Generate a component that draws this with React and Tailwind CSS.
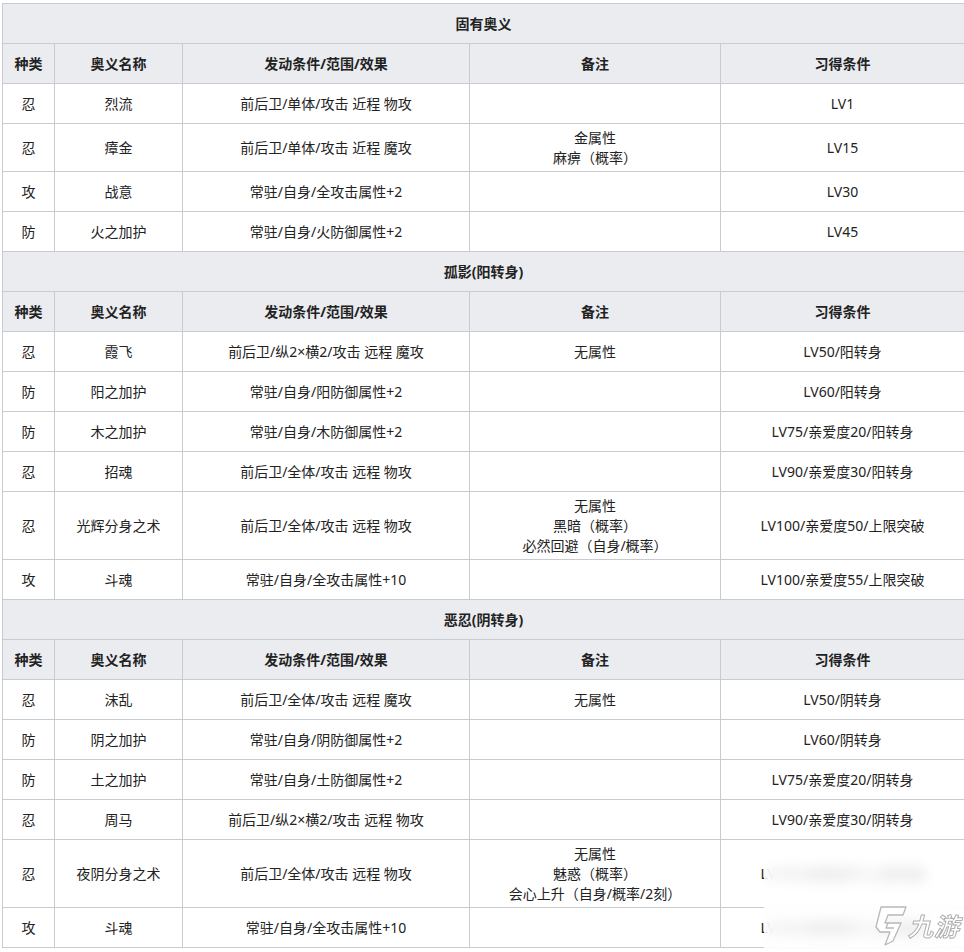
import React from "react";

const sections = [
  {
    title: "固有奥义",
    rows: [
      ["忍", "烈流", "前后卫/单体/攻击 近程 物攻", [], "LV1"],
      ["忍", "瘴金", "前后卫/单体/攻击 近程 魔攻", ["金属性", "麻痹（概率）"], "LV15"],
      ["攻", "战意", "常驻/自身/全攻击属性+2", [], "LV30"],
      ["防", "火之加护", "常驻/自身/火防御属性+2", [], "LV45"],
    ],
  },
  {
    title: "孤影(阳转身)",
    rows: [
      ["忍", "霞飞", "前后卫/纵2×横2/攻击 远程 魔攻", ["无属性"], "LV50/阳转身"],
      ["防", "阳之加护", "常驻/自身/阳防御属性+2", [], "LV60/阳转身"],
      ["防", "木之加护", "常驻/自身/木防御属性+2", [], "LV75/亲爱度20/阳转身"],
      ["忍", "招魂", "前后卫/全体/攻击 远程 物攻", [], "LV90/亲爱度30/阳转身"],
      ["忍", "光辉分身之术", "前后卫/全体/攻击 远程 物攻", ["无属性", "黑暗（概率）", "必然回避（自身/概率）"], "LV100/亲爱度50/上限突破"],
      ["攻", "斗魂", "常驻/自身/全攻击属性+10", [], "LV100/亲爱度55/上限突破"],
    ],
  },
  {
    title: "恶忍(阴转身)",
    rows: [
      ["忍", "沫乱", "前后卫/全体/攻击 远程 魔攻", ["无属性"], "LV50/阴转身"],
      ["防", "阴之加护", "常驻/自身/阴防御属性+2", [], "LV60/阴转身"],
      ["防", "土之加护", "常驻/自身/土防御属性+2", [], "LV75/亲爱度20/阴转身"],
      ["忍", "周马", "前后卫/纵2×横2/攻击 远程 物攻", [], "LV90/亲爱度30/阴转身"],
      ["忍", "夜阴分身之术", "前后卫/全体/攻击 远程 物攻", ["无属性", "魅惑（概率）", "会心上升（自身/概率/2刻）"], "LV100/亲爱度50/上限突破"],
      ["攻", "斗魂", "常驻/自身/全攻击属性+10", [], "LV100/亲爱度55/上限突破"],
    ],
  },
];

const headers = ["种类", "奥义名称", "发动条件/范围/效果", "备注", "习得条件"];

const cell = "border border-[#c8ccd1] px-[8px] py-[3.5px] text-center align-middle";

export default function App() {
  return (
    <div
      className="relative w-[964px] h-[952px] overflow-hidden bg-white text-[#222222] text-[14px] leading-[20px]"
      style={{ fontFamily: '"Noto Sans", "Noto Sans CJK SC", sans-serif' }}
    >
      <div className="pt-[3px] pl-[2px]">
        <table className="table-fixed border-collapse w-[962px]">
          <colgroup>
            <col className="w-[52px]" />
            <col className="w-[128px]" />
            <col className="w-[287px]" />
            <col className="w-[251px]" />
            <col className="w-[244px]" />
          </colgroup>
          <tbody>
            {sections.map((s, si) => (
              <React.Fragment key={si}>
                <tr className="h-[40px]">
                  <th colSpan={5} className={cell + " bg-[#eaecf0] font-bold"}>
                    {s.title}
                  </th>
                </tr>
                <tr className="h-[40px]">
                  {headers.map((h, hi) => (
                    <th key={hi} className={cell + " bg-[#eaecf0] font-bold"}>
                      {h}
                    </th>
                  ))}
                </tr>
                {s.rows.map((r, ri) => (
                  <tr key={ri} className="h-[40px]">
                    <td className={cell}>{r[0]}</td>
                    <td className={cell}>{r[1]}</td>
                    <td className={cell}>{r[2]}</td>
                    <td className={cell}>
                      {r[3].map((l, li) => (
                        <div key={li}>{l}</div>
                      ))}
                    </td>
                    <td className={cell}>{r[4]}</td>
                  </tr>
                ))}
              </React.Fragment>
            ))}
          </tbody>
        </table>
      </div>

      {/* watermark */}
      <div className="absolute left-[764px] top-[852px] w-[200px] h-[100px] bg-white/75 backdrop-blur-[7px]">
        <div className="absolute left-[108px] top-[52px] flex items-end gap-[1px]">
          <svg width="35" height="42" viewBox="0 0 35 42" fill="#ffffff" stroke="#b8b8b8" strokeWidth="1.3" strokeLinejoin="round">
            <path d="M9 3 L34 3 L31 11 L16 11 L13 19 L29 19 L21 37 L13 41 L18 28 L8 28 L4 23 Z" />
            <path d="M16 19 L14 24 L22 24" fill="none" />
          </svg>
          <span
            className="italic font-bold text-[25px] leading-[26px] mb-[8px] text-white tracking-[1px]"
            style={{ WebkitTextStroke: "1px #b0b0b0", fontFamily: '"Noto Sans CJK SC", sans-serif' }}
          >
            九游
          </span>
        </div>
      </div>
    </div>
  );
}
